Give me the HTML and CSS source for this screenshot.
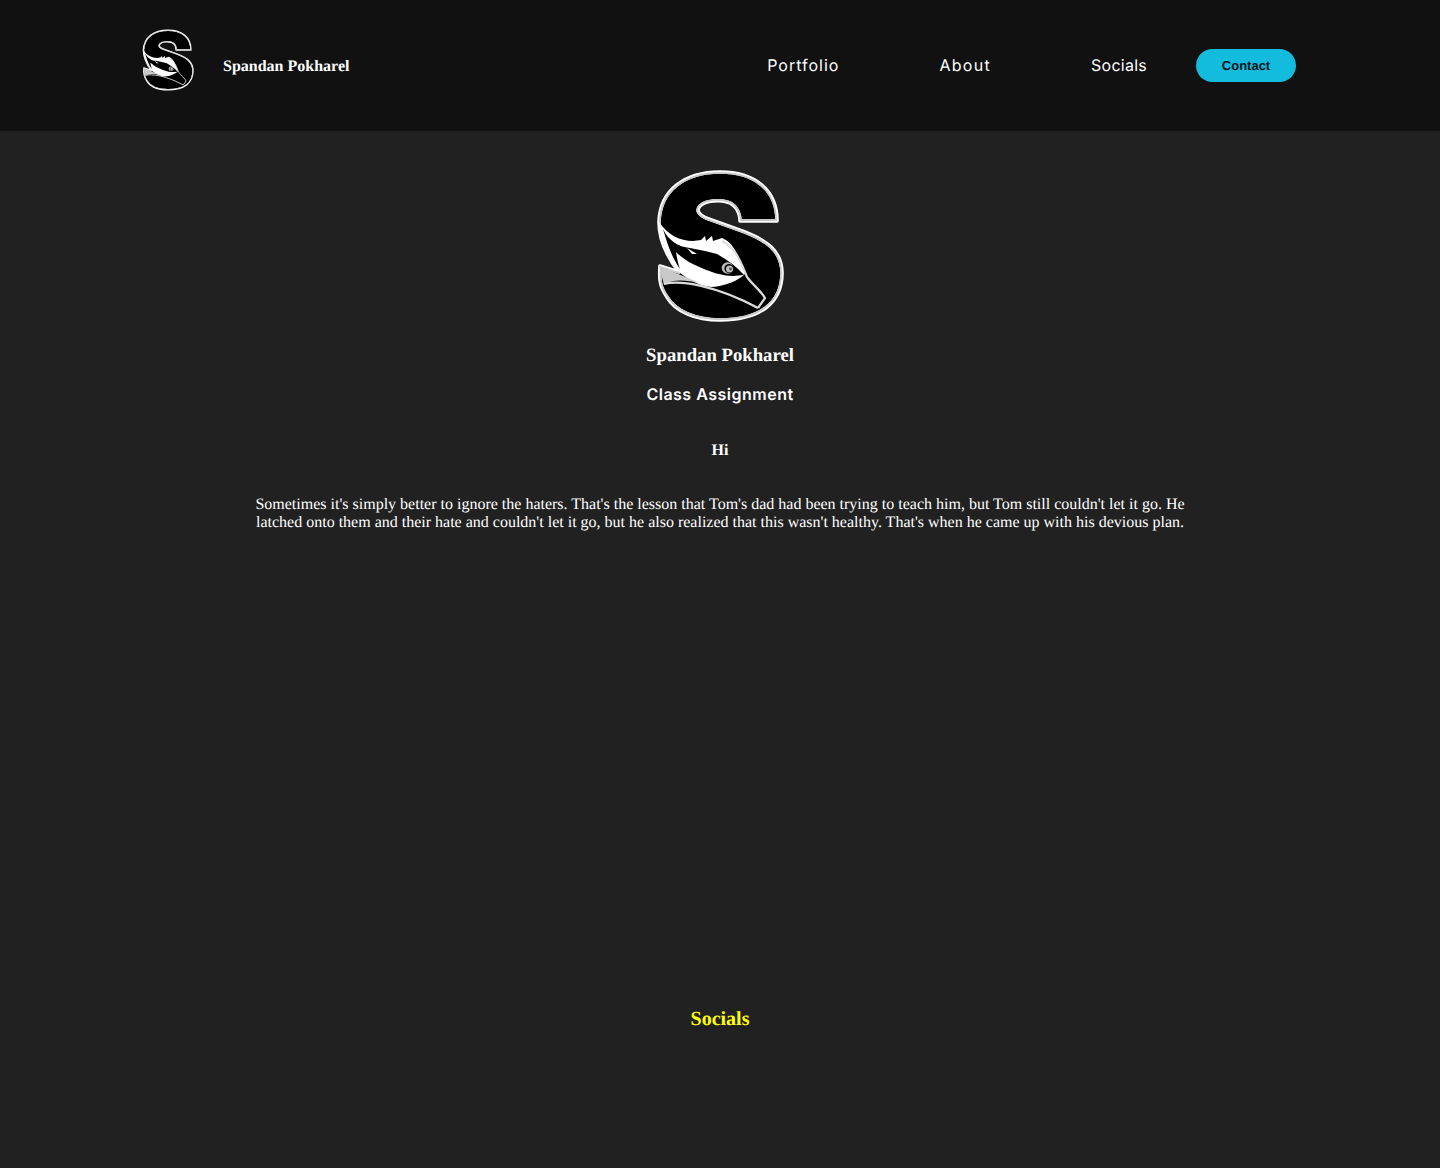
FILE: index.html
```html
<!DOCTYPE html>
<html lang="en">
<head>
<meta charset="utf-8">
<title>Spandan Pokharel</title>
<link rel="stylesheet" href="styles.css">
</head>
<body>
<svg class="defs" width="0" height="0" aria-hidden="true">
  <defs>
    <path id="s-shape" d="M777 221C777 190 755 172 720 172C685 172 660 190 659 222C659 240 668 258 679 272L660 266C659 280 660 287 667 297C675 311 695 320 720 320C760 320 782 303 782 273C782 250 765 240 745 232L706 218C698 214 696 210 700 206C706 200 720 200 727 202C735 204 740 212 740 221Z"/>
    <clipPath id="s-clip"><use href="#s-shape"/></clipPath>
    <symbol id="logo" viewBox="656 169 128 154">
      <use class="s-body" href="#s-shape"/>
      <use class="s-inner" href="#s-shape" clip-path="url(#s-clip)"/>
      <path class="s-wing" d="M659 222C668 235 680 241 693 241L701 240L705 236L706 241L712 236L713 241L722 238C732 242 738 252 745 274C738 281 725 286 712 287C700 286 690 281 679 272C668 258 659 240 659 222Z"/>
      <path class="s-dark" d="M663 229C668 240 678 247 690 248L705 251L717 254C728 260 737 267 744 275L733 276C722 276 710 272 695 265C688 262 680 256 676 252C677 258 678 264 680 269C672 258 667 243 663 229Z"/>
      <path class="s-wing" d="M687 248L697 254L692 254Z"/>
      <path class="s-grey" d="M659 266L700 283C685 280 672 279 664 285Z"/>
      <path class="s-line" d="M722 241C735 247 741 262 747 277C752 284 762 292 765 298L758 308"/>
      <path class="s-line" d="M664 284C680 280 715 285 758 308"/>
      <circle class="s-eye" cx="727.5" cy="268" r="5.8"/>
      <circle class="s-dark" cx="729" cy="268.5" r="4.6"/>
      <circle class="s-eye" cx="729.5" cy="269" r="3.5"/>
      <circle class="s-pupil" cx="730.5" cy="269" r="1.4"/>
    </symbol>
  </defs>
</svg>
<header class="site-header">
  <div class="brand">
    <svg class="logo-small"><use href="#logo"/></svg>
    <span class="brand-name">Spandan Pokharel</span>
  </div>
  <nav class="site-nav">
    <a class="nav-link nav-portfolio" href="#portfolio">Portfolio</a>
    <a class="nav-link nav-about" href="#about">About</a>
    <a class="nav-link nav-socials" href="#socials">Socials</a>
    <a class="contact-btn" href="#contact">Contact</a>
  </nav>
</header>
<main class="content">
  <svg class="logo-large"><use href="#logo"/></svg>
  <h3 class="name">Spandan Pokharel</h3>
  <p class="subtitle">Class Assignment</p>
  <p class="hi">Hi</p>
  <p class="story">Sometimes it's simply better to ignore the haters. That's the lesson that Tom's dad had been trying to teach him, but Tom still couldn't let it go. He latched onto them and their hate and couldn't let it go, but he also realized that this wasn't healthy. That's when he came up with his devious plan.</p>
  <h2 class="socials">Socials</h2>
</main>
</body>
</html>
```
FILE: styles.css
```css
* { box-sizing: border-box; }
html, body { margin: 0; padding: 0; }
body {
  min-height: 1168px;
  background: #212121;
  color: #fff;
  font-family: "Liberation Serif", "Times New Roman", serif;
  font-size: 16px;
  text-rendering: geometricPrecision;
}
.defs { position: absolute; }
.site-header {
  height: 131px;
  background: #111;
  display: flex;
  justify-content: space-between;
  align-items: center;
  padding: 0 144px 0 142px;
}
.brand { display: flex; align-items: center; gap: 29px; }
.logo-small { width: 52px; height: 62px; margin-top: -11px; }
.brand-name { font-weight: 700; font-size: 16px; padding-top: 2px; }
.site-nav { display: flex; align-items: center; }
.nav-link {
  font-family: Inter, "Open Sans", sans-serif;
  font-size: 16px;
  line-height: 18px;
  font-weight: 400;
  color: #fff;
  text-decoration: none;
  padding: 0 50px 2px;
}
.nav-portfolio { letter-spacing: 1px; }
.nav-about { letter-spacing: 1.3px; }
.nav-socials { letter-spacing: 0.25px; padding-right: 49px; }
.contact-btn {
  width: 100px;
  height: 33px;
  border-radius: 17px;
  background: #13bbdc;
  color: #05141a;
  font-family: "Liberation Sans", Arial, sans-serif;
  font-size: 13px;
  font-weight: 700;
  display: flex;
  align-items: center;
  justify-content: center;
  text-decoration: none;
}
.content {
  display: flex;
  flex-direction: column;
  align-items: center;
  padding-top: 38px;
  text-align: center;
}
.logo-large { width: 128px; height: 154px; display: block; }
.name { margin: 22px 0 0; font-size: 18.72px; line-height: 22px; font-weight: 700; }
.subtitle {
  margin: 17px 0 0;
  font-family: Inter, "Open Sans", sans-serif;
  font-size: 16px;
  font-weight: 600;
  letter-spacing: 0.5px;
  line-height: 20px;
}
.hi { margin: 38px 0 0; font-weight: 700; line-height: 18px; }
.story { margin: 36px 0 0; width: 940px; line-height: 18px; }
.socials { margin: 476px 0 0; font-size: 20px; line-height: 23px; color: #ff0; font-weight: 700; }
.s-body { fill: #000; stroke: #fff; stroke-width: 3.6; stroke-linejoin: round; }
.s-inner { fill: none; stroke: #c8c8c8; stroke-width: 3.4; stroke-linejoin: round; }
.s-line { fill: none; stroke: #dcdcdc; stroke-width: 2.2; stroke-linejoin: round; }
.s-wing { fill: #fff; }
.s-grey { fill: #c9c9c9; }
.s-dark { fill: #000; }
.s-eye { fill: #bdbdbd; }
.s-pupil { fill: #555; }
```
